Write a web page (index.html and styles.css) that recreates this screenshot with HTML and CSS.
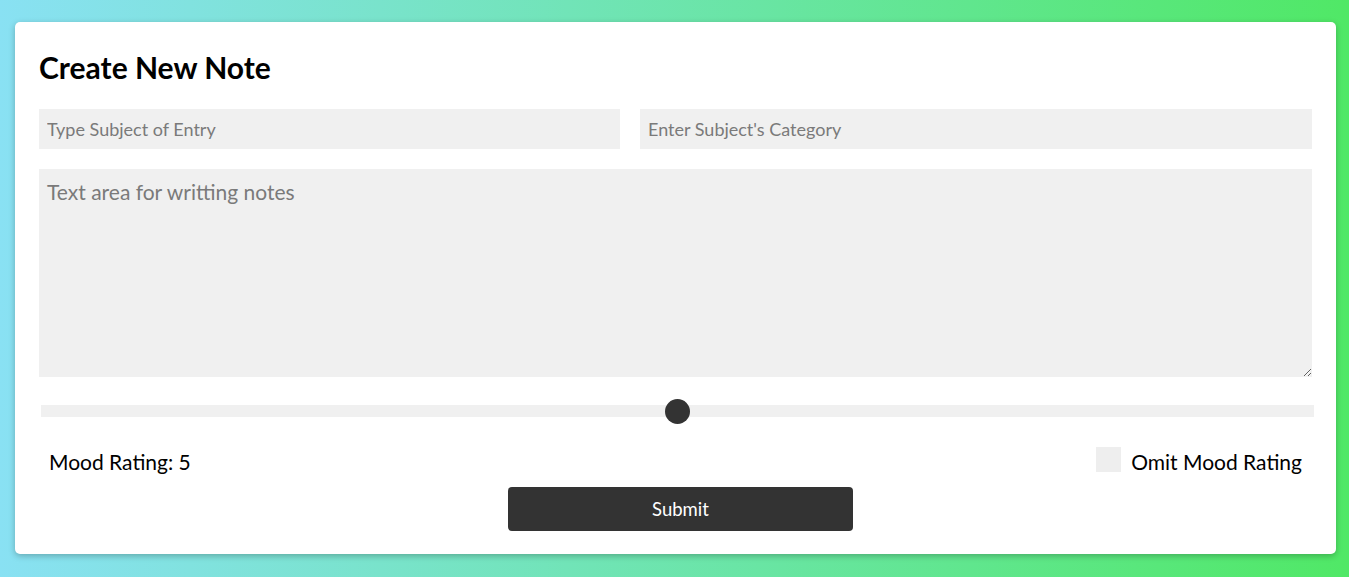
FILE: index.html
```html
<!DOCTYPE html>
<html>
<head>
<meta charset="utf-8">
<link rel="stylesheet" href="styles.css">
</head>
<body>
<form class="card">
  <h1 class="title">Create New Note</h1>
  <div class="row-fields">
    <input class="field" type="text" placeholder="Type Subject of Entry">
    <input class="field" type="text" placeholder="Enter Subject's Category">
  </div>
  <textarea class="notes" placeholder="Text area for writting notes"></textarea>
  <input class="slider" type="range" min="0" max="10" value="5">
  <div class="mood-row">
    <span class="mood-label">Mood Rating: 5</span>
    <label class="omit">
      <span class="box"></span>
      <span>Omit Mood Rating</span>
    </label>
  </div>
  <button class="submit" type="button">Submit</button>
</form>
</body>
</html>
```

FILE: styles.css
```css
* { box-sizing: border-box; }
html, body { height: 100%; }
body {
  margin: 0;
  padding: 22px 13px 23px 15px;
  background: linear-gradient(to right, #89e1f3, #50e866);
  font-family: Lato, "PT Sans", "Noto Sans", sans-serif;
  color: #000;
}
.card {
  background: #fff;
  border-radius: 5px;
  box-shadow: 0 2px 6px rgba(0,0,0,0.25);
  padding: 24px 24px 23px 24px;
  display: flex;
  flex-direction: column;
  height: 532px;
}
.title {
  margin: 0;
  font-size: 30px;
  line-height: 42px;
  font-weight: 700;
  height: 40px;
}
.row-fields {
  margin-top: 23px;
  display: flex;
  gap: 20px;
}
.field {
  flex: 1;
  height: 40px;
  border: none;
  background: #f0f0f0;
  padding: 0 8px;
  font-family: inherit;
  font-size: 18px;
  outline: none;
}
.row-fields .field:first-child { flex: 0 0 581px; }
.field::placeholder, .notes::placeholder { color: #7a7a7a; }
.notes {
  margin-top: 20px;
  height: 208px;
  border: none;
  background: #f0f0f0;
  padding: 10px 8px;
  font-family: inherit;
  font-size: 21px;
  outline: none;
  width: 100%;
}
.slider {
  -webkit-appearance: none;
  appearance: none;
  margin: 28px 0 0 2px;
  width: 100%;
  height: 12px;
  background: #f0f0f0;
  outline: none;
}
.slider::-webkit-slider-thumb {
  -webkit-appearance: none;
  appearance: none;
  width: 25px;
  height: 25px;
  border-radius: 50%;
  background: #333;
  cursor: pointer;
}
.mood-row {
  margin-top: 30px;
  height: 25px;
  display: flex;
  align-items: center;
  justify-content: space-between;
  padding: 0 10px;
  font-size: 21px;
}
.mood-label { padding-top: 3px; }
.omit {
  display: flex;
  align-items: center;
  gap: 10px;
}
.omit span:last-child { padding-top: 3px; }
.box {
  width: 25px;
  height: 25px;
  background: #eee;
  display: block;
}
.submit {
  margin: 15px 0 0 469px;
  width: 345px;
  height: 44px;
  border: none;
  border-radius: 4px;
  background: #333;
  color: #fff;
  font-family: inherit;
  font-size: 18.5px;
}
```
